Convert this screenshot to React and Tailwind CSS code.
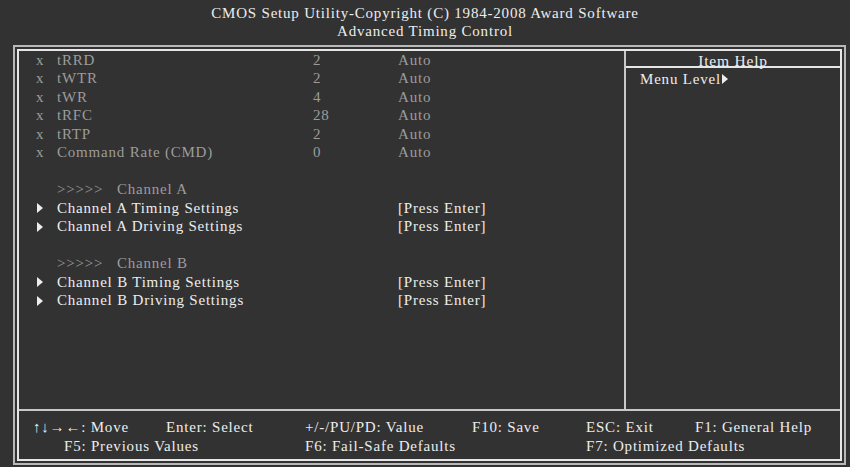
import React from "react";

const grey = [
  ["tRRD", "2"],
  ["tWTR", "2"],
  ["tWR", "4"],
  ["tRFC", "28"],
  ["tRTP", "2"],
  ["Command Rate (CMD)", "0"],
];

function Tri({ className }) {
  return (
    <svg width="6" height="10" viewBox="0 0 6 10" className={className}>
      <polygon points="0,0 6,5 0,10" fill="currentColor" />
    </svg>
  );
}

function Row({ children }) {
  return <div className="grid grid-cols-[22px_256px_85px_1fr] h-[18.5px] items-center">{children}</div>;
}

function SubMenu({ name }) {
  return (
    <Row>
      <span className="pl-[2px]">
        <Tri />
      </span>
      <span>{name}</span>
      <span></span>
      <span>[Press Enter]</span>
    </Row>
  );
}

export default function App() {
  return (
    <div
      className="w-[850px] h-[467px] bg-[#323232] text-[#ededed] text-[15px] tracking-[0.8px] leading-none overflow-hidden"
      style={{ fontFamily: '"Liberation Serif", "Times New Roman", serif' }}
    >
      {/* Title */}
      <div className="text-center pt-[6px] h-[45px]">
        <div className="h-[18px]">CMOS Setup Utility-Copyright (C) 1984-2008 Award Software</div>
        <div className="h-[18px]">Advanced Timing Control</div>
      </div>

      <div className="ml-[13px] w-[833px] h-[420px] border-2 border-[#b8b8b8] p-[2px]">
        <div className="h-full border-2 border-[#e6e6e6] flex flex-col">
          <div className="flex flex-1">
            {/* Items */}
            <div className="w-[605px] pl-[16px]">
              {grey.map(([name, val]) => (
                <div key={name} className="text-[#9c9c9c]">
                  <Row>
                    <span className="pl-[1px]">x</span>
                    <span>{name}</span>
                    <span>{val}</span>
                    <span>Auto</span>
                  </Row>
                </div>
              ))}
              <Row />
              <div className="text-[#9c9c9c]">
                <Row>
                  <span></span>
                  <span>&gt;&gt;&gt;&gt;&gt;&nbsp;&nbsp; Channel A</span>
                </Row>
              </div>
              <SubMenu name="Channel A Timing Settings" />
              <SubMenu name="Channel A Driving Settings" />
              <Row />
              <div className="text-[#9c9c9c]">
                <Row>
                  <span></span>
                  <span>&gt;&gt;&gt;&gt;&gt;&nbsp;&nbsp; Channel B</span>
                </Row>
              </div>
              <SubMenu name="Channel B Timing Settings" />
              <SubMenu name="Channel B Driving Settings" />
            </div>

            {/* Item help */}
            <div className="flex-1 border-l-2 border-[#c8c8c8]">
              <div className="h-[17px] border-b-2 border-[#e6e6e6] flex items-center justify-center pt-[4px] text-[15.5px]">
                Item Help
              </div>
              <div className="h-[19px] flex items-center pl-[14px] pt-[3px]">
                Menu Level
                <Tri className="ml-[1px]" />
              </div>
            </div>
          </div>

          {/* Footer */}
          <div className="h-[50px] border-t-2 border-[#c8c8c8] pl-[14px] pt-[7px]">
            <div className="grid grid-cols-[133px_139px_167px_114px_109px_1fr] h-[19px] items-center">
              <span>↑↓→←: Move</span>
              <span>Enter: Select</span>
              <span>+/-/PU/PD: Value</span>
              <span>F10: Save</span>
              <span>ESC: Exit</span>
              <span>F1: General Help</span>
            </div>
            <div className="grid grid-cols-[133px_139px_167px_114px_109px_1fr] h-[19px] items-center">
              <span className="col-span-2 pl-[31px]">F5: Previous Values</span>
              <span className="col-span-2">F6: Fail-Safe Defaults</span>
              <span className="col-span-2">F7: Optimized Defaults</span>
            </div>
          </div>
        </div>
      </div>
    </div>
  );
}
